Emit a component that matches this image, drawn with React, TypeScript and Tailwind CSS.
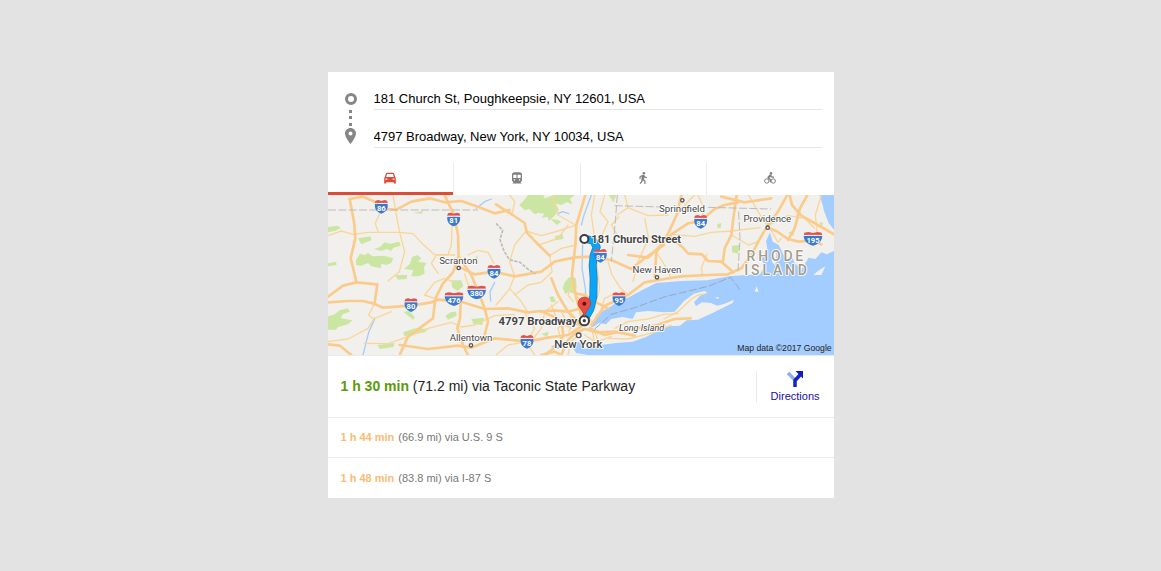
import { useState } from 'react';

const CarIcon = () => (
  <path
    fillRule="evenodd"
    d="M2.800 .8h6.400l.9 .5l1 3.700l.7 .8v5.700h-2v-1.300H2.200v1.300H.2V5.800l.7-.8l1-3.700ZM3 2L2.200 5h7.600L9 2ZM1.500 6.600v1.200h1.800V6.600ZM8.700 6.600v1.200h1.800V6.600Z"
  />
);

const TransitIcon = () => (
  <path
    fillRule="evenodd"
    d="M3 .3h6l2 1.200v7.300L9.600 10.300l1 1.200H1.400l1-1.200L1 8.800V1.500ZM2.300 2.800v3.200h3.200V2.800ZM6.500 2.800v3.200h3.200V2.800ZM2.800 7.300v1.200h1.300V7.300ZM7.900 7.300v1.200h1.300V7.300Z"
  />
);

const WalkIcon = () => (
  <>
    <circle cx="6.900" cy="1.300" r="1.300" />
    <path d="M5 3L7 2.800L8.300 4.600L10 5.200V6.200L7.900 5.700L7.500 5.300L7 7.300L8.500 8.700V12H7.300V9.400L5.900 8.200L5.200 10.300L3.400 12L2.500 11.200L4.100 9.600L4.800 4.500L3.600 5.200V7H2.500V4.500Z" />
  </>
);

const BikeIcon = () => (
  <>
    <circle cx="2.800" cy="9" r="2.200" fill="none" stroke="currentColor" strokeWidth="1" />
    <circle cx="9.200" cy="9" r="2.200" fill="none" stroke="currentColor" strokeWidth="1" />
    <circle cx="7" cy="1.400" r="1.300" />
    <path d="M5.600 2.600L7.200 3.100L8.300 4.500H10V5.700H7.700L6.700 4.800L5.500 5.900L7 7.200V10.300H5.800V7.900L3.500 6.200V5Z" />
  </>
);

const MODES = [
  { id: 'car', label: 'Driving', icon: CarIcon },
  { id: 'transit', label: 'Transit', icon: TransitIcon },
  { id: 'walk', label: 'Walking', icon: WalkIcon },
  { id: 'bike', label: 'Cycling', icon: BikeIcon }
] as const;

const OTHER_ROUTES = [
  { time: '1 h 44 min', detail: '(66.9 mi) via U.S. 9 S' },
  { time: '1 h 48 min', detail: '(83.8 mi) via I-87 S' }
];

const PARKS = [
  'M0,96 L30,92 L38,100 L20,108 L0,112Z',
  'M90,130 L128,124 L130,136 L100,148Z',
  'M84,196 L96,176 L110,180 L120,174 L134,184 L168,182 L196,190 L190,204 L176,210 L160,206 L158,220 L130,214 L120,204 L100,212 L84,210Z',
  'M138,162 L156,156 L170,142 L186,146 L214,140 L218,152 L196,158 L190,168 L176,162 L160,168Z',
  'M228,222 L246,206 L252,186 L268,180 L280,190 L270,200 L296,204 L288,216 L290,236 L272,244 L250,244 L256,226Z',
  'M0,205 L24,200 L26,210 L0,214Z',
  'M200,240 L238,240 L236,252 L210,254Z',
  'M0,364 L20,358 L34,346 L60,340 L66,350 L44,358 L38,370 L74,376 L60,388 L30,396 L24,404 L0,404Z',
  'M226,350 L244,348 L260,366 L256,374 L240,362Z',
  'M370,256 L400,256 L406,274 L388,288 L372,276Z',
  'M352,362 L368,352 L384,350 L386,362 L360,374Z',
  'M430,372 L470,368 L462,390 L436,386Z',
  'M148,450 L200,444 L196,456 L156,462Z',
  'M225,412 L260,400 L300,402 L290,412 L230,424Z',
  'M574,30 L590,14 L600,0 L646,0 L650,10 L680,0 L740,0 L726,12 L734,28 L716,22 L700,30 L684,26 L692,46 L680,62 L662,78 L660,66 L640,68 L650,56 L630,54 L620,58 L604,42 L590,46Z',
  'M668,72 L688,74 L700,80 L686,90Z',
  'M680,124 L704,118 L706,132 L684,136Z',
  'M664,306 L676,304 L684,320 L670,322Z',
  'M710,262 L724,246 L744,250 L746,280 L738,296 L722,290 L712,298 L704,280Z',
  'M574,366 L592,370 L584,384Z',
  'M640,416 L662,410 L658,426Z',
  'M842,0 L866,0 L856,22Z',
  'M1168,88 L1180,84 L1178,100 L1168,98Z',
  'M1212,152 L1234,150 L1230,176 L1212,172Z',
  'M1380,112 L1400,108 L1396,124Z',
  'M1474,80 L1486,84 L1480,98Z',
  'M440,190 L450,180 L448,194Z',
  'M255,54 L286,48 L280,56Z'
];

const HIGHWAYS = [
  'M65,12 L105,5 L140,20 L165,42 L205,44 L250,20 L305,10 L350,22 L400,18 L445,34 L500,55 L545,45',
  'M65,12 L78,80 L82,130 L68,190 L78,230 L85,262 L148,268 L140,322',
  'M0,305 L45,272 L85,262',
  'M350,0 L378,60 L390,120 L392,185 L375,232 L345,265 L322,310 L315,370 L240,425 L215,480',
  'M0,322 L60,318 L105,318 L135,325 L165,338 L250,332 L310,322 L330,314 L400,320 L470,342 L540,340 L600,352 L640,348 L700,376 L760,390',
  'M392,185 L430,240 L470,340 L480,380 L470,420',
  'M392,215 L440,238 L498,230 L560,244 L640,230 L680,200 L740,187 L790,185 L850,195 L910,222 L950,190 L1008,150',
  'M504,28 L554,60 L590,84 L596,112 L632,150 L665,182',
  'M772,0 L745,90 L742,150 L732,240 L745,310 L765,380',
  'M0,448 L36,452 L70,480',
  'M398,320 L396,370 L388,400 L405,450 L420,480',
  'M215,450 L300,462 L390,452 L430,458 L500,430 L597,440 L660,428 L720,420 L760,394',
  'M790,390 L830,332 L900,300 L950,262 L1010,252 L1060,244 L1138,240 L1200,238 L1240,220 L1270,180 L1296,130 L1319,92 L1350,50 L1378,0',
  'M1060,0 L1046,60 L1022,112 L985,172 L980,245',
  'M900,180 L960,188 L1000,150 L1030,118 L1080,85 L1118,78 L1160,42 L1190,30 L1230,22',
  'M1030,128 L1062,155 L1080,175 L1122,178 L1140,198 L1180,200 L1216,232',
  'M1319,98 L1345,108 L1380,132 L1412,140 L1455,136 L1480,148',
  'M1226,0 L1216,70 L1210,120 L1190,160 L1185,198',
  'M1385,0 L1392,30 L1420,62 L1480,96 L1518,118',
  'M1438,0 L1416,40 L1400,100 L1380,134',
  'M1180,5 L1250,22 L1330,10',
  'M700,480 L716,440 L740,416 L770,402 L810,412 L860,410 L920,422',
  'M785,400 L830,420 L900,404 L980,392 L1040,372 L1088,370',
  'M640,480 L680,470 L700,480',
  'M760,390 L720,350 L690,300 L670,250',
  'M840,340 L800,320 L770,300 L745,296',
  'M640,350 L680,346 L720,350 L758,340',
  'M700,376 L706,420 L690,450 L650,480'
];

const ROADS = [
  'M0,122 L40,108 L75,118 L120,112 L215,112 L255,116 L285,148 L318,178 L380,180',
  'M195,0 L205,60 L215,112 L230,170 L214,230 L180,258',
  'M160,45 L142,85 L150,110',
  'M372,90 L370,150 L360,180 L325,180 L310,205 L330,235',
  'M420,180 L450,166 L480,172 L498,205',
  'M140,325 L122,360 L136,372 L190,350',
  'M0,440 L60,432 L120,400 L140,368',
  'M108,445 L180,446 L240,425 L300,400 L370,382 L400,396 L440,390 L500,362 L560,358',
  'M330,314 L290,300 L320,262 L350,250 L378,262',
  'M410,237 L424,280 L440,300',
  'M594,108 L560,150 L545,200 L560,244',
  'M594,108 L640,122 L690,108 L740,92',
  'M632,150 L690,130 L720,90',
  'M672,0 L690,60 L742,90',
  'M545,0 L560,20 L552,60',
  'M745,150 L700,160 L665,182 L672,230 L640,262 L600,270 L560,300',
  'M560,244 L545,280 L580,320 L600,352',
  'M504,330 L530,300 L545,280',
  'M620,480 L600,450 L640,400 L650,350 L690,320',
  'M504,480 L540,450 L597,440 L620,400 L590,352',
  'M800,0 L790,60 L800,130 L806,200 L815,280 L800,340',
  'M830,0 L816,50 L840,80 L818,130',
  'M868,60 L900,38 L960,62 L1020,60',
  'M900,38 L890,0',
  'M868,120 L850,90 L872,66',
  'M840,200 L852,240 L878,280 L900,300',
  'M950,70 L962,130 L930,200 L915,260',
  'M985,172 L1010,210 L1030,250',
  'M1046,60 L1080,20 L1100,0',
  'M1030,118 L1100,124 L1150,112 L1210,108 L1296,98',
  'M1118,78 L1128,40 L1110,0',
  'M1136,178 L1120,220 L1124,240',
  'M1210,120 L1262,150 L1290,140',
  'M1262,0 L1290,50 L1319,92',
  'M1319,92 L1380,62 L1430,70 L1460,100',
  'M1480,0 L1462,60 L1470,130',
  'M1330,108 L1350,142 L1360,130',
  'M1008,372 L1050,350 L1090,312 L1110,300 L1134,296',
  'M860,400 L900,380 L960,372 L1008,358 L1050,356',
  'M840,430 L900,432 L980,412 L1030,390',
  'M700,440 L690,400 L716,380 L700,350',
  'M720,480 L728,440 L752,421',
  'M740,296 L770,330 L790,380',
  'M720,350 L736,380 L722,410',
  'M736,320 L720,300 L732,270',
  'M670,330 L690,380 L730,400',
  'M800,408 L810,440 L850,424',
  'M770,420 L800,440 L790,400',
  'M820,340 L830,310 L860,296'
];

const CREEKS = [
  'M760,90 L768,60 L790,0',
  'M764,150 L762,220 L772,280 L774,350',
  'M140,372 L122,412 L105,480',
  'M445,40 L470,20 L490,12',
  'M500,262 L486,290 L488,318',
  'M690,56 L704,50 L722,56'
];

const BORDERS = ['M0,45 L450,45', 'M868,0 L862,80 L856,140 L850,200', 'M860,32 L1000,36', 'M1140,37 L1330,42', 'M1232,50 L1236,130 L1230,230'];

const ROUTE_PATH = 'M776,132 L796,138 L806,156 L797,182 L794,212 L797,250 L796,304 L787,342 L772,368';

const PLACES = [
  { name: 'Scranton', x: 391, y: 206, dot: [392, 219] },
  { name: 'Allentown', x: 429, y: 437, dot: [429, 451] },
  { name: 'Springfield', x: 1062, y: 50, dot: [1063, 16] },
  { name: 'Providence', x: 1318, y: 81, dot: [1319, 98] },
  { name: 'New Haven', x: 987, y: 233, dot: [987, 247] }
];

const SHIELDS = [
  { no: '86', x: 160, y: 35 },
  { no: '81', x: 377, y: 73 },
  { no: '84', x: 498, y: 230 },
  { no: '80', x: 249, y: 330 },
  { no: '476', x: 378, y: 312 },
  { no: '380', x: 446, y: 292 },
  { no: '84', x: 817, y: 182 },
  { no: '95', x: 873, y: 312 },
  { no: '78', x: 597, y: 440 },
  { no: '84', x: 1118, y: 80 },
  { no: '195', x: 1455, y: 131 }
];

const Shield = ({ no, x, y }: { no: string; x: number; y: number }) => (
  <g transform={`translate(${x} ${y})`}>
    {no.length > 2 ? (
      <>
        <path d="M-28,-8 C-26,8 -18,16 0,21 C18,16 26,8 28,-8Z" fill="#3b79cf" />
        <path d="M-26,-18 L-14,-20 L0,-17 L14,-20 L26,-18 L28,-10 L-28,-10Z" fill="#e0524c" />
      </>
    ) : (
      <>
        <path d="M-19,-8 C-21,8 -13,16 0,21 C13,16 21,8 19,-8Z" fill="#3b79cf" />
        <path d="M-17,-18 L-9,-20 L0,-17 L9,-20 L17,-18 L20,-10 L-20,-10Z" fill="#e0524c" />
      </>
    )}
    <path d={no.length > 2 ? 'M-28,-10 H28' : 'M-20,-10 H20'} stroke="#fff" strokeWidth="2" />
    <text y="12" textAnchor="middle" fontSize="23" fontWeight="700" fill="#fff">{no}</text>
  </g>
);

const RouteMap = () => (
  <svg viewBox="0 0 1518 480" className="block w-full h-auto" fontFamily="Roboto, sans-serif" role="img" aria-label="Route map">
    <rect width="1518" height="480" fill="#f2f0ec" />
    {PARKS.map((d) => <path key={d} d={d} fill="#cbe6a3" />)}

    {/* Ocean, sound and bays */}
    <path
      d="M790,396 L806,358 L846,336 L866,322 L900,308 L944,284 L985,264 L1014,262 L1060,258 L1138,256 L1208,243 L1296,238 L1310,215 L1300,190 L1318,160 L1314,138 L1326,112 L1334,140 L1352,150 L1366,178 L1374,196 L1392,180 L1398,202 L1420,224 L1442,188 L1462,192 L1480,172 L1496,178 L1518,168 V480 H780 L745,474 L730,452 L750,440 L772,452 L790,420Z"
      fill="#a3ccff"
    />
    <path d="M1474,0 L1484,30 L1488,48 L1502,84 L1518,104 V0Z" fill="#a3ccff" />
    <path d="M668,455 L700,440 L712,448 L690,462Z M1448,222 L1462,210 L1460,232Z" fill="#a3ccff" />

    {/* Long Island and the smaller islands */}
    <path
      d="M776,404 L799,394 L812,384 L834,388 L850,372 L884,366 L914,372 L924,352 L960,348 L1008,352 L1040,350 L1068,318 L1098,296 L1130,288 L1138,293 L1116,302 L1098,322 L1104,334 L1122,322 L1148,324 L1168,332 L1190,326 L1218,314 L1214,324 L1158,352 L1110,374 L1076,376 L1056,392 L1016,394 L954,426 L914,440 L864,444 L804,452 L770,462 L764,438Z"
      fill="#f2f0ec"
    />
    <path d="M1160,308 L1172,306 L1172,312Z M1280,290 L1286,274 L1292,290Z M1366,150 L1382,146 L1386,172 L1372,176Z M1334,168 L1346,176 L1342,212 L1332,200Z M1456,240 L1470,228 L1492,214 L1480,240Z" fill="#f2f0ec" />

    <g fill="none" strokeLinejoin="round" strokeLinecap="round">
      {CREEKS.map((d) => <path key={d} d={d} stroke="#a3ccff" strokeWidth="4" />)}
      {ROADS.map((d) => <path key={d} d={d} stroke="#f9d697" strokeWidth="4" />)}
      {HIGHWAYS.map((d) => <path key={d} d={d} stroke="#fbcb8b" strokeWidth="8" />)}
    </g>
    <g fill="none" stroke="#bdbcb8" strokeWidth="3" strokeDasharray="24 7">
      {BORDERS.map((d) => <path key={d} d={d} />)}
      <path d="M504,85 L524,106 L516,134 L528,168 L544,194 L576,202 L602,224 L622,236" strokeWidth="5" strokeDasharray="10 4" />
      <path d="M800,402 L850,358 L920,338 L1008,306 L1140,274 L1208,247 L1236,284" stroke="#9aa8ba" />
    </g>

    {/* Chosen route */}
    <g fill="none" strokeLinejoin="round" strokeLinecap="round">
      <path id="route" d={ROUTE_PATH} stroke="#1c7fc9" strokeWidth="24" />
      <path d={ROUTE_PATH} stroke="#0ba5f8" strokeWidth="19" />
    </g>

    {SHIELDS.map((s) => <Shield key={`${s.no}-${s.x}`} {...s} />)}

    <g stroke="#fff" strokeWidth="5" paintOrder="stroke" strokeLinejoin="round" fill="#444" textAnchor="middle">
      {PLACES.map((p) => (
        <g key={p.name}>
          <circle cx={p.dot[0]} cy={p.dot[1]} r="5" fill="#fff" stroke="#555" strokeWidth="4" paintOrder="normal" />
          <text x={p.x} y={p.y} fontSize="29">{p.name}</text>
        </g>
      ))}
      <circle cx="752" cy="421" r="7" fill="#fff" stroke="#555" strokeWidth="4" paintOrder="normal" />
      <text x="751" y="459" fontSize="34" fontWeight="500">New York</text>
      <text x="941" y="408" fontSize="27" fontStyle="italic">Long Island</text>
      <g fill="#a29a8c" fontSize="42" fontWeight="500" className="tracking-[0.2em]">
        <text x="1345" y="197">RHODE</text>
        <text x="1347" y="240">ISLAND</text>
      </g>
      <text x="790" y="144" fontSize="33" fontWeight="700" textAnchor="start">181 Church Street</text>
      <text x="748" y="390" fontSize="34" fontWeight="700" textAnchor="end">4797 Broadway</text>
    </g>

    <circle cx="769" cy="132" r="12" fill="#fff" stroke="#3c3c3c" strokeWidth="6" />
    <circle cx="769" cy="377" r="14" fill="#fff" stroke="#3c3c3c" strokeWidth="6" />
    <circle cx="769" cy="377" r="5" fill="#3c3c3c" />
    <path d="M769,368 C767,346 750,340 750,325 A19,19 0 0 1 788,325 C788,340 771,346 769,368Z" fill="#ea4a3f" stroke="#b93a30" strokeWidth="2" />
    <circle cx="769" cy="326" r="6" fill="#5c1411" />

    <text x="1511" y="469" textAnchor="end" fontSize="26" fontFamily="Liberation Sans, sans-serif" fill="#222">
      Map data ©2017 Google
    </text>
  </svg>
);

const Waypoints = () => (
  <svg width="14" height="54" viewBox="0 0 14 54" fill="#868686" aria-hidden="true">
    <circle cx="7" cy="6" r="4.500" fill="none" stroke="#868686" strokeWidth="3" />
    <path d="M5 17h3v3h-3zM5 23h3v3h-3zM5 30h3v3h-3z" />
    <path fillRule="evenodd" d="M6.500 35C3.400 35 1 37.400 1 40.500C1 44.500 6.500 51 6.500 51S12 44.500 12 40.500C12 37.400 9.600 35 6.500 35ZM6.500 38.500a2 2 0 1 0 0 4a2 2 0 1 0 0-4Z" />
  </svg>
);

const DirectionsIcon = () => (
  <svg width="16" height="16" viewBox="0 0 16 16" fill="none" aria-hidden="true">
    <path d="M1 2L7.500 8.500" stroke="#8cb1e2" strokeWidth="3.500" />
    <path d="M8 16V9.500L13 4" stroke="#1420c8" strokeWidth="3.500" />
    <path d="M8.500 0H16V7.500Z" fill="#0d1bb8" />
  </svg>
);

export default function App() {
  const [mode, setMode] = useState('car');
  const [from, setFrom] = useState('181 Church St, Poughkeepsie, NY 12601, USA');
  const [to, setTo] = useState('4797 Broadway, New York, NY 10034, USA');

  return (
    <div className="min-h-screen bg-[#e3e3e3] py-18 font-['Liberation_Sans',Arial,sans-serif]">
      <main className="mx-auto w-full max-w-[506px] bg-white">
        {/* Start and destination */}
        <form className="flex pt-4 pr-3 pb-[15px]">
          <div className="w-[46px] shrink-0 flex justify-center pt-[5px]">
            <Waypoints />
          </div>
          <div className="flex-1 flex flex-col gap-4">
            <input
              aria-label="Starting point"
              value={from}
              onChange={(e) => setFrom(e.target.value)}
              className="w-full h-[22px] border-b border-[#e5e5e5] text-[13px] text-black outline-none"
            />
            <input
              aria-label="Destination"
              value={to}
              onChange={(e) => setTo(e.target.value)}
              className="w-full h-[22px] border-b border-[#e5e5e5] text-[13px] text-black outline-none"
            />
          </div>
        </form>

        {/* Travel modes */}
        <div className="grid grid-cols-4 divide-x divide-[#ebebeb]">
          {MODES.map(({ id, label, icon: Icon }) => (
            <button
              key={id}
              type="button"
              aria-label={label}
              onClick={() => setMode(id)}
              className={`h-8 pb-[2px] flex items-center justify-center ${mode === id ? 'text-[#dd4b39] shadow-[inset_0_-3px_0_#dd4b39]' : 'text-[#808080]'}`}
            >
              <svg width="12" height="12" viewBox="0 0 12 12" fill="currentColor" aria-hidden="true">
                <Icon />
              </svg>
            </button>
          ))}
        </div>

        <RouteMap />

        {/* Best route */}
        <section className="flex items-center justify-between border-y border-[#ebebeb] h-[63px] pl-[13px]">
          <p className="text-[14px] text-[#222]">
            <b className="text-[#5a9a08]">1 h 30 min</b> (71.2 mi) via Taconic State Parkway
          </p>
          <div className="h-8 flex items-center border-l border-[#ebebeb] px-[14px]">
            <a href="#route" className="flex flex-col items-center gap-[2px] text-[11px] leading-[14px] text-[#1a0dab]">
              <DirectionsIcon />
              Directions
            </a>
          </div>
        </section>

        <div className="divide-y divide-[#ebebeb]">
          {OTHER_ROUTES.map((route) => (
            <p key={route.time} className="flex items-center gap-1 h-10 pl-[13px] text-[11px] text-[#777]">
              <b className="text-[#fbbc72]">{route.time}</b>
              {route.detail}
            </p>
          ))}
        </div>
      </main>
    </div>
  );
}
